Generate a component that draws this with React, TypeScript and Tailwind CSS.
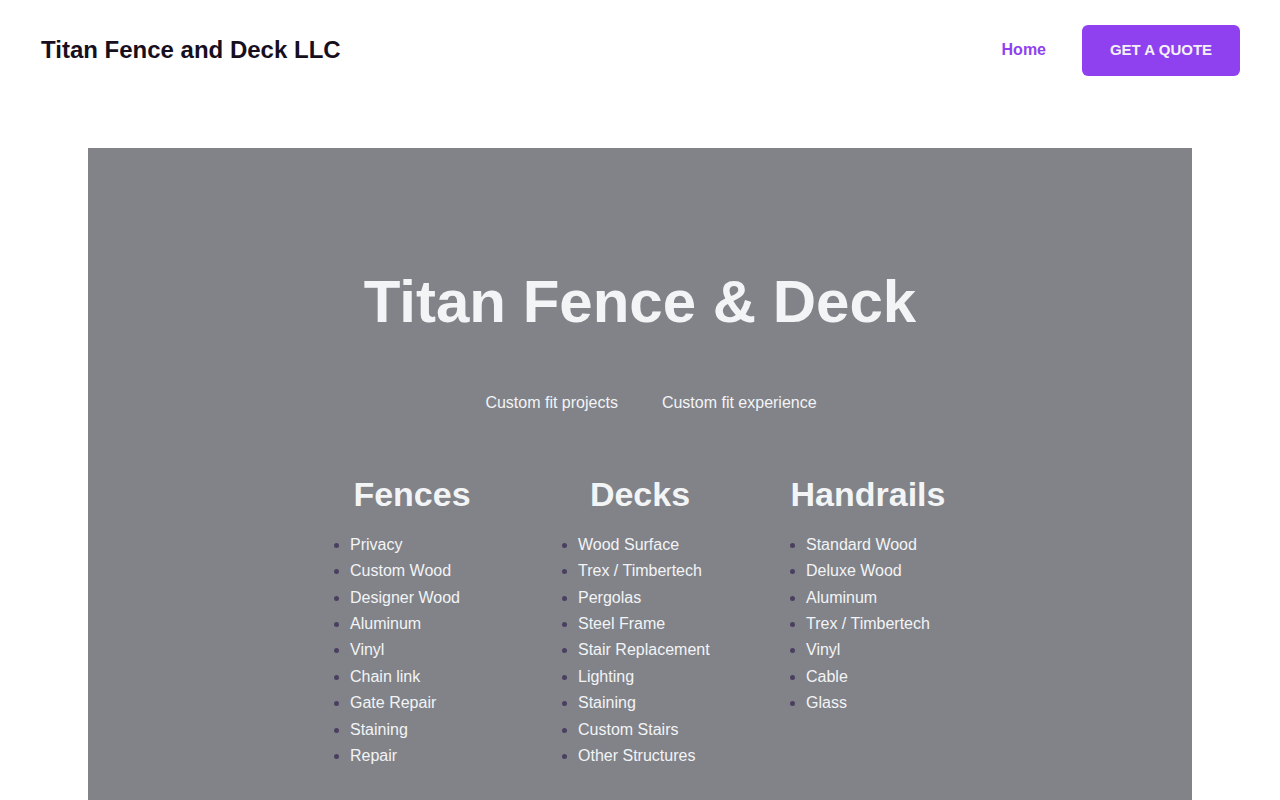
const columns = [
  {
    title: "Fences",
    items: ["Privacy", "Custom Wood", "Designer Wood", "Aluminum", "Vinyl", "Chain link", "Gate Repair", "Staining", "Repair"],
  },
  {
    title: "Decks",
    items: ["Wood Surface", "Trex / Timbertech", "Pergolas", "Steel Frame", "Stair Replacement", "Lighting", "Staining", "Custom Stairs", "Other Structures"],
  },
  {
    title: "Handrails",
    items: ["Standard Wood", "Deluxe Wood", "Aluminum", "Trex / Timbertech", "Vinyl", "Cable", "Glass"],
  },
];

export default function App() {
  return (
    <div className="min-h-screen bg-white font-['Liberation_Sans',Arial,sans-serif]">
      {/* header */}
      <header className="flex h-[100px] items-center justify-between pl-[41px] pr-10">
        <h1 className="text-2xl font-bold text-[#170f1e]">Titan Fence and Deck LLC</h1>
        <nav className="flex items-center gap-9">
          <a href="#" className="text-base font-bold text-[#9041ef]">Home</a>
          <a
            href="#"
            className="flex h-[51px] w-[158px] items-center justify-center rounded-md bg-[#9041ef] text-[15px] font-bold text-[#f3f1f7]"
          >
            GET A QUOTE
          </a>
        </nav>
      </header>

      {/* hero */}
      <section className="mx-[88px] mt-12 bg-[#818389] pb-20 pt-[124px] text-[#f3f4f6]">
        <h2 className="text-center text-6xl font-bold leading-none">Titan Fence &amp; Deck</h2>
        <div className="mt-[59px] flex justify-center gap-11 pl-[22px] text-base leading-6">
          <span>Custom fit projects</span>
          <span>Custom fit experience</span>
        </div>
        <div className="mt-[59px] flex justify-center">
          {columns.map((col) => (
            <div key={col.title} className="w-[228px]">
              <h3 className="text-center text-[34px] font-bold leading-[1.2]">{col.title}</h3>
              <ul className="mt-[17px] list-disc pl-[52px] text-base leading-[26.4px] marker:text-[#4b3f60]">
                {col.items.map((it, i) => (
                  <li key={i}>{it}</li>
                ))}
              </ul>
            </div>
          ))}
        </div>
      </section>
    </div>
  );
}
